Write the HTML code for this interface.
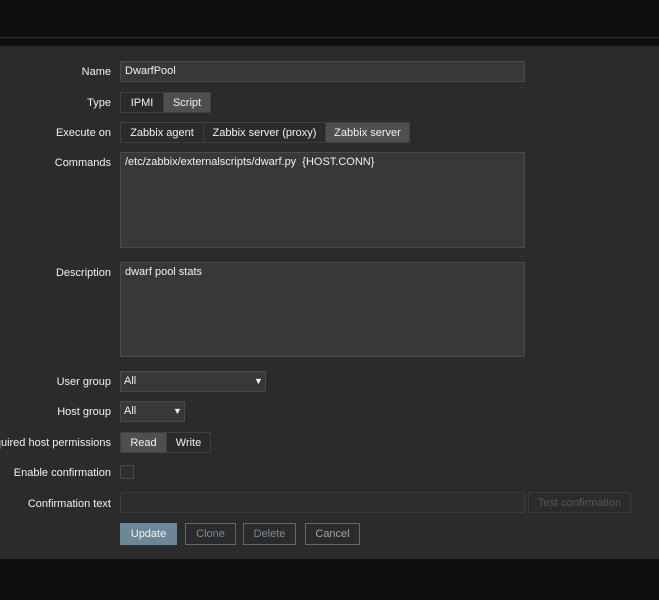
<!DOCTYPE html>
<html><head><style>
body{margin:0;width:659px;height:600px;background:#0e0f11;font-family:"Liberation Sans",Arial,sans-serif;font-size:11px;color:#f2f2f2;position:relative;overflow:hidden}
.top{position:absolute;left:0;top:0;width:659px;height:37px;background:#0e0f11;border-bottom:1px solid #2a2b2d}
.panel{position:absolute;left:0;top:46px;width:659px;height:513px;background:#2b2b2b}
.l{position:absolute;right:548px;text-align:right;white-space:nowrap;margin-top:1px}
.b{position:absolute;box-sizing:border-box;border:1px solid #4a4a4a;background:#383838}
.t{position:absolute;line-height:21px;white-space:nowrap}
.seg{position:absolute;box-sizing:border-box;border:1px solid #3f3f3f;background:#2b2b2b;text-align:center;line-height:20px}
.on{background:#4f4f4f}
.btn{position:absolute;box-sizing:border-box;border:1px solid #5b6b74;color:#7d8a93;text-align:center;line-height:20px}
</style></head><body>
<div class="top"></div>
<div class="panel"></div>
<div class="l" style="top:65px">Name</div>
<div class="b" style="left:120px;top:61px;width:405px;height:21px"></div>
<div class="t" style="left:125px;top:61px">DwarfPool</div>
<div class="l" style="top:96px">Type</div>
<div class="seg" style="left:120px;top:92px;width:44px;height:21px">IPMI</div>
<div class="seg on" style="left:163px;top:92px;width:48px;height:21px">Script</div>
<div class="l" style="top:126px">Execute on</div>
<div class="seg" style="left:120px;top:122px;width:84px;height:21px">Zabbix agent</div>
<div class="seg" style="left:203px;top:122px;width:123px;height:21px">Zabbix server (proxy)</div>
<div class="seg on" style="left:325px;top:122px;width:85px;height:21px">Zabbix server</div>
<div class="l" style="top:156px">Commands</div>
<div class="b" style="left:120px;top:152px;width:405px;height:96px"></div>
<div class="t" style="left:125px;top:152px">/etc/zabbix/externalscripts/dwarf.py &nbsp;{HOST.CONN}</div>
<div class="l" style="top:266px">Description</div>
<div class="b" style="left:120px;top:262px;width:405px;height:95px"></div>
<div class="t" style="left:125px;top:262px">dwarf pool stats</div>
<div class="l" style="top:375px">User group</div>
<div class="b" style="left:120px;top:371px;width:146px;height:21px"></div>
<div class="t" style="left:124px;top:371px">All</div><div class="t" style="left:254px;top:371px;font-size:9px">▼</div>
<div class="l" style="top:405px">Host group</div>
<div class="b" style="left:120px;top:401px;width:65px;height:21px"></div>
<div class="t" style="left:124px;top:401px">All</div><div class="t" style="left:173px;top:401px;font-size:9px">▼</div>
<div class="l" style="top:436px">quired host permissions</div>
<div class="seg on" style="left:120px;top:432px;width:47px;height:21px">Read</div>
<div class="seg" style="left:166px;top:432px;width:45px;height:21px">Write</div>
<div class="l" style="top:466px">Enable confirmation</div>
<div class="b" style="left:120px;top:465px;width:14px;height:14px;background:#2f2f2f"></div>
<div class="l" style="top:497px">Confirmation text</div>
<div class="b" style="left:120px;top:492px;width:405px;height:21px;background:#2d2d2d;border-color:#3a3a3a"></div>
<div class="seg" style="left:528px;top:492px;width:103px;height:21px;color:#555;border-color:#3a3a3a">Test confirmation</div>
<div class="btn" style="left:120px;top:523px;width:57px;height:22px;background:#6c8797;color:#f2f2f2;border-color:#6c8797">Update</div>
<div class="btn" style="left:185px;top:523px;width:51px;height:22px">Clone</div>
<div class="btn" style="left:243px;top:523px;width:53px;height:22px">Delete</div>
<div class="btn" style="left:305px;top:523px;width:55px;height:22px;color:#9aa5ad">Cancel</div>
</body></html>
